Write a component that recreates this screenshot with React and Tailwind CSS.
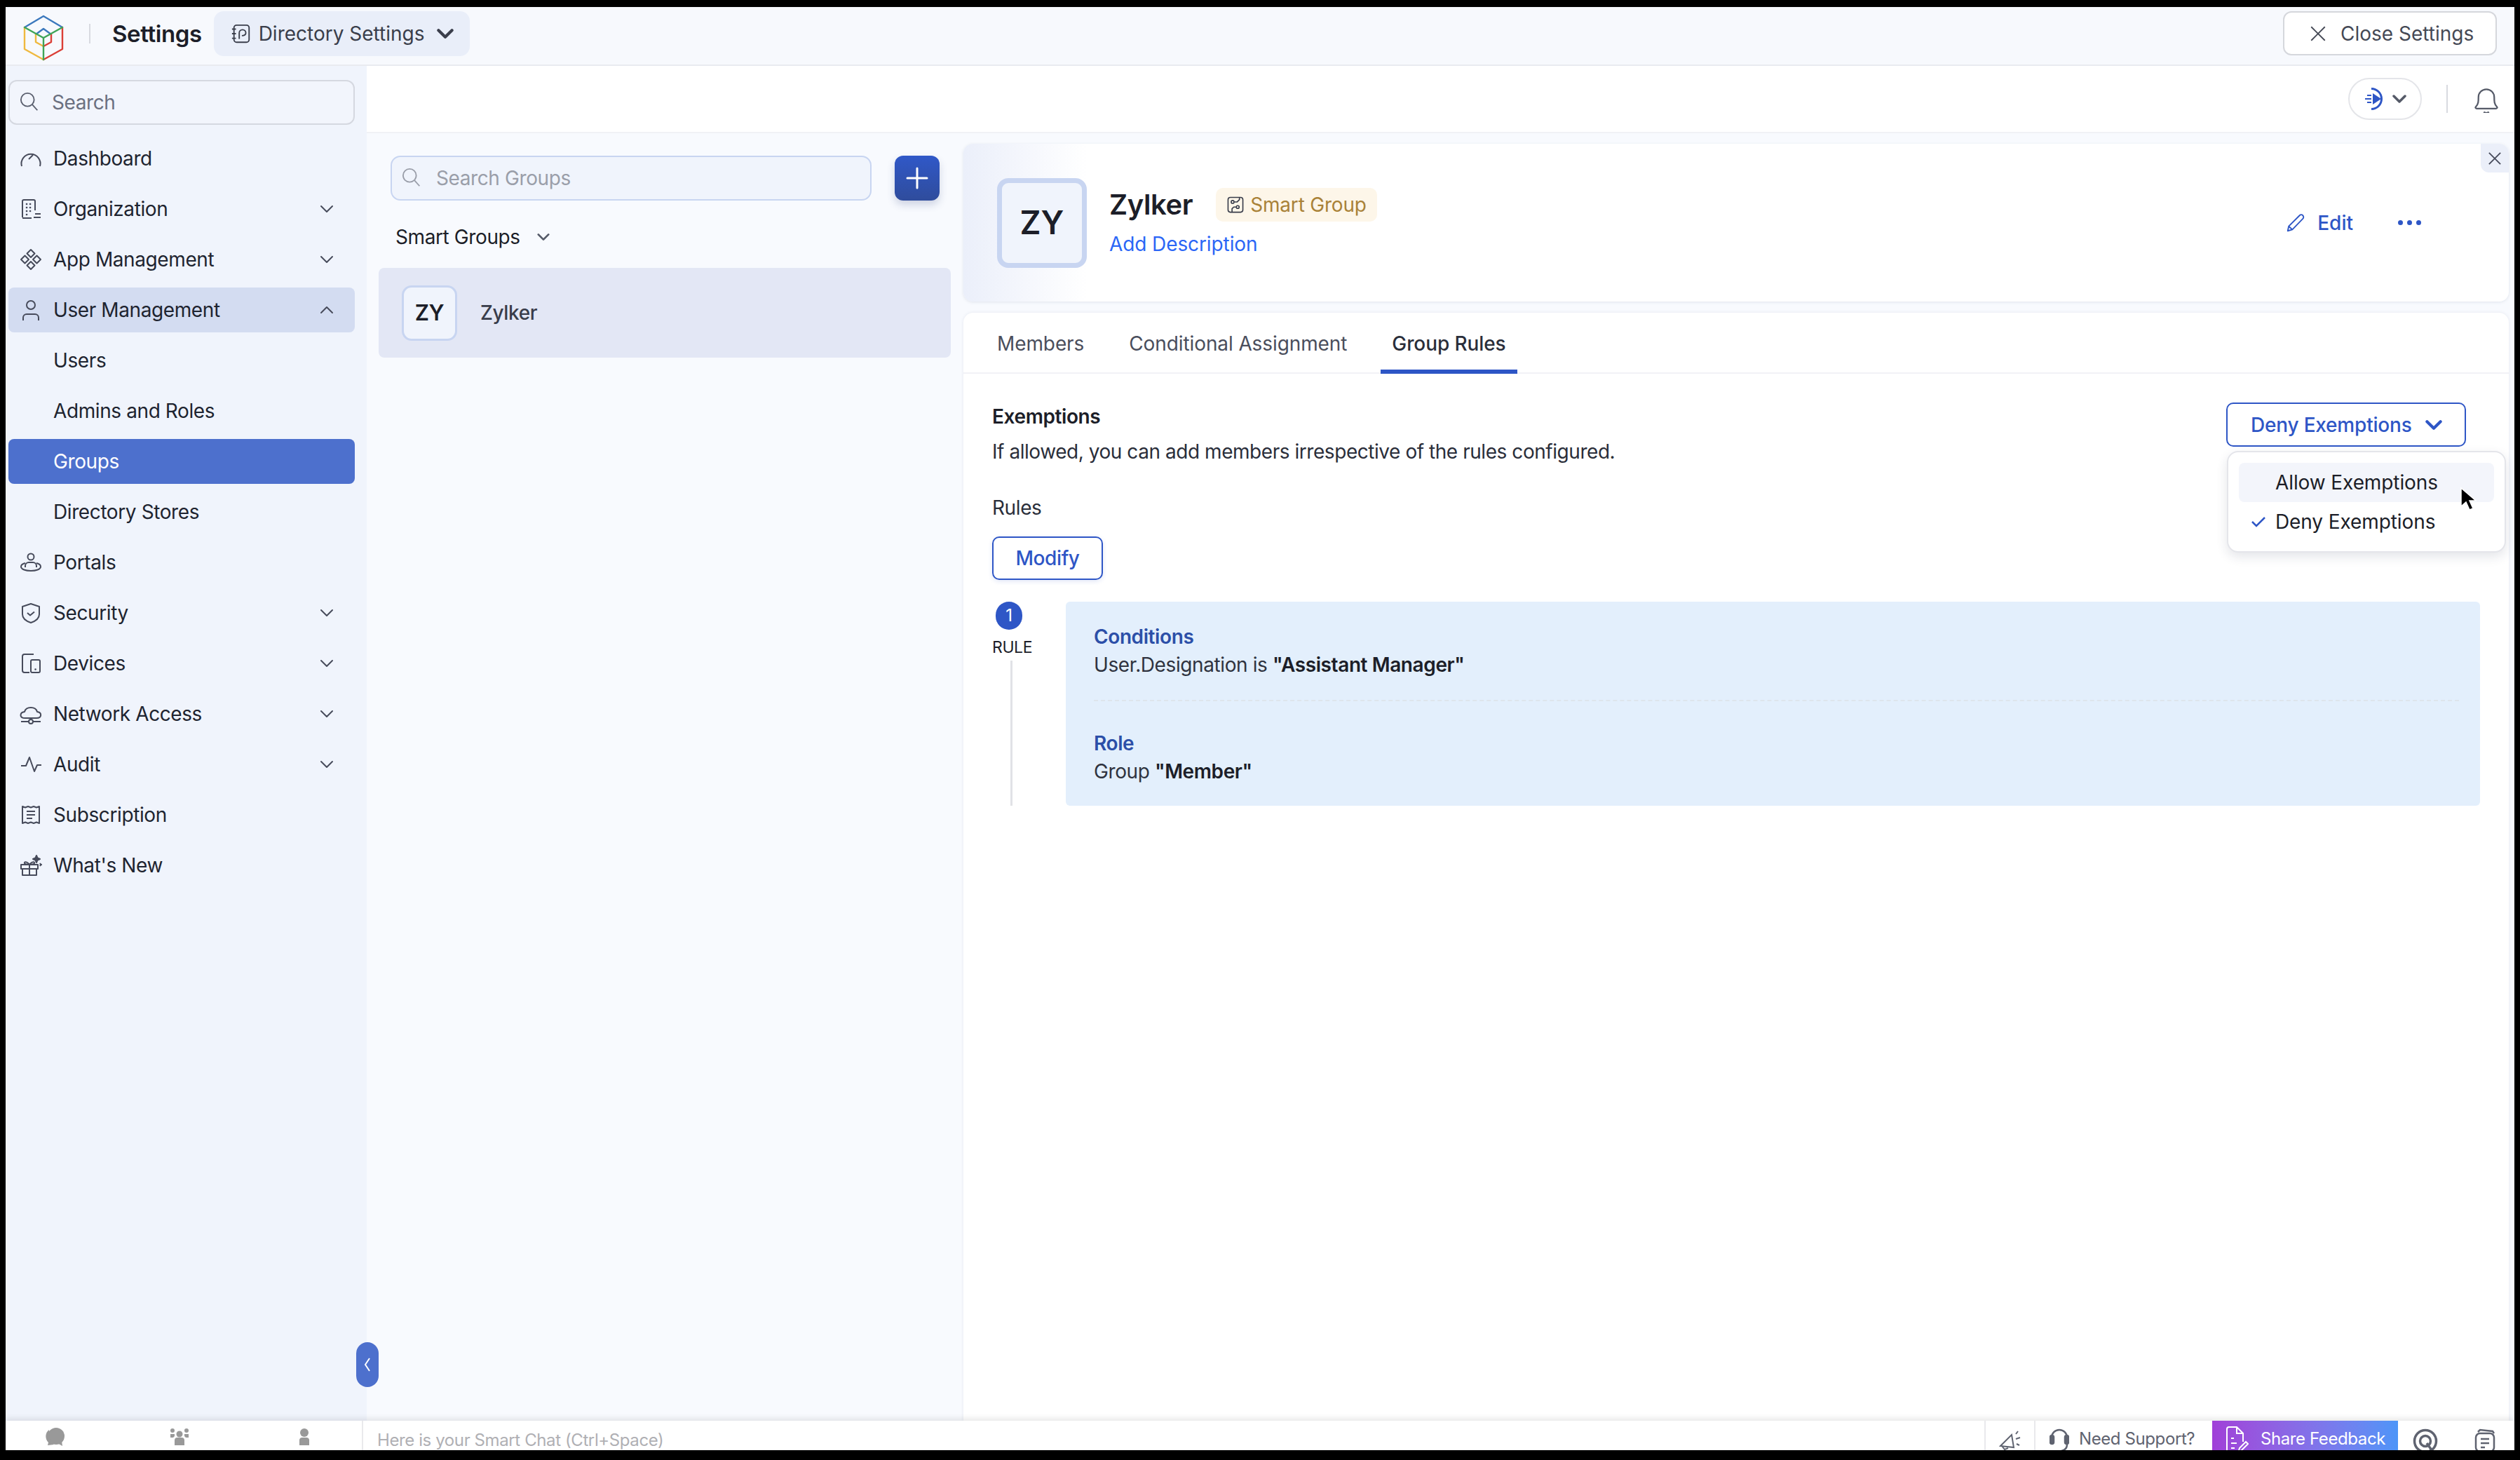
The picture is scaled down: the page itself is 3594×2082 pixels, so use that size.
const icons = {
  gauge: <><path d="M3 27a13.5 13.5 0 1 1 26 0" /><path d="M13 17l6-6" /></>,
  building: <><path d="M4 28V5a2 2 0 0 1 2-2h14a2 2 0 0 1 2 2v13" /><path d="M4 29h13" /><path d="M22 23h8M20 28h10" /><path d="M10 9h.1M15 9h.1M10 14h.1M15 14h.1M10 19h.1M15 19h.1M10 24h.1" strokeWidth="2.6" strokeLinecap="round" /></>,
  apps: <><path d="M16 2l5.5 5.5L16 13l-5.5-5.5z" /><path d="M7.5 10.5L13 16l-5.5 5.5L2 16z" /><path d="M24.5 10.5L30 16l-5.5 5.5L19 16z" /><path d="M16 19l5.5 5.5L16 30l-5.500-5.500z" /></>,
  user: <><circle cx="16" cy="9" r="6" /><path d="M5 31v-4a5 5 0 0 1 5-5h12a5 5 0 0 1 5 5v4" /></>,
  portal: <><circle cx="16" cy="8" r="4.500" /><path d="M8 23v-2a5 5 0 0 1 5-5h6a5 5 0 0 1 5 5v2" /><path d="M8 17c-4 1-6 3-6 5 0 4 7 6 14 6s14-2 14-6c0-2-2-4-6-5" /></>,
  shield: <><path d="M16 3l12 4v11c0 6-6 10-12 12-6-2-12-6-12-12V7z" /><path d="M11 16l4 3.500 6-5" /></>,
  devices: <><path d="M20 3H7a3 3 0 0 0-3 3v20a3 3 0 0 0 3 3h7" /><rect x="16" y="11" width="13" height="18" rx="2" /><path d="M22.500 24.500h.1" strokeWidth="2.500" strokeLinecap="round" /></>,
  cloud: <><path d="M8 22c-9 0-8-8-1-9 2-8 16-8 18 0 7 1 7 9-1 9z" /><path d="M2 27h11M19 27h11" /><circle cx="16" cy="27" r="3" /><path d="M16 22v2" /></>,
  pulse: <><path d="M2 18h7l5-12 7 20 4-9h6" /></>,
  receipt: <><path d="M4 4l4 1.500L12 4l4 1.500L20 4l4 1.500L28 4v24l-4-1.500L20 28l-4-1.500L12 28l-4-1.500L4 28z" /><path d="M10 11h12M10 16h12M10 21h8" /></>,
  gift: <><rect x="2" y="15" width="24" height="6" /><path d="M4 21v9h20v-9M14 15v15" /><path d="M14 15c-2-3-6-5-7-3s3 3 7 3c4 0 8-1 7-3s-5 0-7 3" /><path d="M24 2l1.500 3.500L29 7l-3.500 1.500L24 12l-1.500-3.500L19 7l3.500-1.500z" fill="#474b5b" /><path d="M29 13l.8 1.500 1.200.5-1.200.5-.8 1.500" /></>,
  search: <><circle cx="12" cy="12" r="10" /><path d="M19 19l8 9" /></>,
  close: <path d="M3 3l26 26M29 3L3 29" />,
  notebook: <><rect x="5" y="3" width="23" height="26" rx="4" /><path d="M2 9h6M2 16h6M2 23h6" /><path d="M13 24v-9a5 5 0 0 1 10 0c0 3-3 4-6 4" /></>,
  chip: <><rect x="3" y="3" width="26" height="26" rx="4" /><circle cx="11" cy="11" r="2.500" /><circle cx="20" cy="20" r="2.500" /><path d="M14 11h5l4-4v-4M17 20h-4l-3 3v6" /></>,
  pencil: <><path d="M4 28l1.500-7L22 4.500a3 3 0 0 1 5 5L11 26z" /><path d="M5.500 21l5.500 5" /></>,
  bell: <><path d="M4 25c3-3 3-6 3-11a9 9 0 0 1 18 0c0 5 0 8 3 11 1 1 0 2-1 2H5c-1 0-2-1-1-2z" /><path d="M13 31c2 1.500 4 1.500 6 0" /></>,
};

function Icon({ name, size = 32, color = '#474b5b', width = 2, className = '' }) {
  return (
    <svg width={size} height={size} viewBox="0 0 32 32" fill="none" stroke={color} strokeWidth={width} strokeLinejoin="round" className={`shrink-0 ${className}`}>
      {icons[name]}
    </svg>
  );
}

function Chevron({ size = 20, color = '#474b5b', width = 2, up = false, className = '' }) {
  return (
    <svg width={size} height={size} viewBox="0 0 20 20" fill="none" stroke={color} strokeWidth={width} strokeLinecap="round" strokeLinejoin="round" className={`shrink-0 ${className}`}>
      <path d={up ? 'M2 14l8-8 8 8' : 'M2 6l8 8 8-8'} />
    </svg>
  );
}

function Logo() {
  return (
    <svg width="100" height="72" viewBox="0 0 100 72" fill="none" strokeWidth="2.400" strokeLinejoin="round" strokeLinecap="round" className="shrink-0 mt-[2px]">
      <path d="M15 21L42 5l27 16M31 31l11-8 11 8" stroke="#3b78bd" />
      <path d="M15 21v31l27 15M31 31v11l11 6" stroke="#efb93f" />
      <path d="M69 21v31L42 67M53 31v11l-11 6" stroke="#db3f36" />
      <path d="M15 21l27 15 27-15M42 36v31" stroke="#3fa557" />
    </svg>
  );
}

function Avatar() {
  return (
    <div className="flex h-[79px] w-[79px] items-center justify-center rounded-[14px] border-[3px] border-[#c8d5f1] bg-[#f0f4fc] text-[31px] font-semibold text-[#1c1e28]">
      ZY
    </div>
  );
}

const navItems = [
  { label: 'Dashboard', icon: 'gauge' },
  { label: 'Organization', icon: 'building', chevron: true },
  { label: 'App Management', icon: 'apps', chevron: true },
  { label: 'User Management', icon: 'user', chevron: true, open: true },
  { label: 'Users', sub: true },
  { label: 'Admins and Roles', sub: true },
  { label: 'Groups', sub: true, active: true },
  { label: 'Directory Stores', sub: true },
  { label: 'Portals', icon: 'portal' },
  { label: 'Security', icon: 'shield', chevron: true },
  { label: 'Devices', icon: 'devices', chevron: true },
  { label: 'Network Access', icon: 'cloud', chevron: true },
  { label: 'Audit', icon: 'pulse', chevron: true },
  { label: 'Subscription', icon: 'receipt' },
  { label: "What's New", icon: 'gift' },
];

function NavRow({ item }) {
  const bg = item.active ? 'bg-[#4d70cd] text-white' : item.open ? 'bg-[#d3dcf1] text-[#1e2430]' : 'text-[#1e2430]';
  return (
    <div className={`flex h-[64px] items-center rounded-[8px] pl-[16px] pr-[30px] ${bg}`}>
      <div className="w-[48px] shrink-0">{item.icon && <Icon name={item.icon} />}</div>
      <span className="flex-1">{item.label}</span>
      {item.chevron && <Chevron up={item.open} />}
    </div>
  );
}

function Sidebar() {
  return (
    <aside className="relative w-[515px] shrink-0 bg-[#f0f4fc] pl-[4px] pr-[17px] pt-[20px]">
      <div className="flex h-[64px] items-center rounded-[12px] border-2 border-[#d5d8e0] bg-[#f2f5fc] pl-[14px] text-[#6b7080]">
        <Icon name="search" size={30} color="#5a5f6e" />
        <span className="ml-[16px]">Search</span>
      </div>
      <nav className="mt-[16px] flex flex-col gap-[8px]">
        {navItems.map((item) => (
          <NavRow key={item.label} item={item} />
        ))}
      </nav>
      <div className="absolute left-[500px] top-[1820px] z-10 flex h-[64px] w-[32px] items-center justify-center rounded-full bg-[#4d70cd]">
        <svg width="14" height="22" viewBox="0 0 14 22" fill="none" stroke="#fff" strokeWidth="2"><path d="M10 2L4 11l6 9" /></svg>
      </div>
    </aside>
  );
}

function GroupList() {
  return (
    <section className="w-[851px] shrink-0 pt-[32px]">
      <div className="flex gap-[33px] pl-[34px]">
        <div className="flex h-[64px] w-[686px] items-center rounded-[14px] border-2 border-[#c8d5f1] bg-[#f0f4fc] pl-[14px] text-[#9a9ea9]">
          <Icon name="search" size={30} color="#9a9ea9" />
          <span className="ml-[19px]">Search Groups</span>
        </div>
        <div className="flex h-[64px] w-[64px] items-center justify-center rounded-[12px] bg-gradient-to-b from-[#3058c8] to-[#2f4c9c] shadow-[0_6px_12px_rgba(40,60,120,0.2)]">
          <svg width="32" height="32" viewBox="0 0 32 32" stroke="#fff" strokeWidth="3" strokeLinecap="round"><path d="M16 2v28M2 16h28" /></svg>
        </div>
      </div>
      <div className="ml-[41px] mt-[32px] flex h-[40px] items-center gap-[24px] text-[#1c1e28]">
        Smart Groups
        <Chevron size={18} width={3} color="#555a68" />
      </div>
      <div className="ml-[17px] mt-[24px] flex h-[128px] w-[816px] items-center gap-[33px] rounded-[8px] bg-[#e3e7f5] pl-[33px]">
        <Avatar />
        <span className="font-medium text-[#383c4a]">Zylker</span>
      </div>
    </section>
  );
}

function GroupHeader() {
  return (
    <div className="relative flex h-[225px] shrink-0 items-center rounded-[14px] bg-gradient-to-r from-[#ebeffa] via-white to-white pl-[48px] pr-[125px] tracking-normal shadow-[0_1px_4px_rgba(60,70,110,0.12)] [--tw-gradient-via-position:8%]">
      <div className="flex h-[128px] w-[128px] items-center justify-center rounded-[16px] border-[7px] border-[#c8d5f1] bg-[#f0f4fc] text-[46px] font-semibold text-[#1c1e28]">
        ZY
      </div>
      <div className="ml-[32px] flex flex-1 flex-col">
        <div className="flex items-center gap-[33px]">
          <span className="text-[40px] font-semibold leading-[50px] tracking-[-0.4px] text-[#1c1e28]">Zylker</span>
          <span className="flex h-[48px] items-center gap-[8px] rounded-[10px] bg-[#fdf6e9] px-[15px] tracking-[-0.2px] text-[#a98238]">
            <Icon name="chip" size={26} color="#383c4a" />
            Smart Group
          </span>
        </div>
        <span className="mt-[10px] tracking-[-0.1px] text-[#2b66f6]">Add Description</span>
      </div>
      <div className="flex items-center text-[#2e56c6]">
        <Icon name="pencil" size={30} color="#2e56c6" />
        <span className="ml-[16px] font-medium">Edit</span>
        <span className="ml-[64px] flex gap-[6px]">
          <i className="h-[7px] w-[7px] rounded-full bg-[#2e56c6]" />
          <i className="h-[7px] w-[7px] rounded-full bg-[#2e56c6]" />
          <i className="h-[7px] w-[7px] rounded-full bg-[#2e56c6]" />
        </span>
      </div>
      <div className="absolute right-0 top-0 flex h-[41px] w-[40px] items-center justify-center rounded-bl-[12px] rounded-tr-[14px] bg-[#ebeff9]">
        <Icon name="close" size={20} color="#474b5b" width={3} />
      </div>
    </div>
  );
}

function ExemptionMenu() {
  return (
    <div className="relative w-[342px] tracking-[-0.1px]">
      <div className="flex h-[63px] items-center justify-between rounded-[10px] border-2 border-[#2e56c6] bg-white pl-[33px] pr-[32px] font-medium tracking-[-0.2px] text-[#2e56c6]">
        Deny Exemptions
        <Chevron size={24} width={3.500} color="#2e56c6" />
      </div>
      <div className="absolute left-[1px] top-[69px] z-20 h-[145px] w-[398px] rounded-[16px] border-2 border-[#e4e5ea] bg-white px-[15px] pt-[15px] shadow-[0_6px_16px_rgba(30,40,70,0.12)]">
        <div className="relative flex h-[56px] items-center rounded-[8px] bg-[#f3f5fb] pl-[52px] text-[#1c1e28]">
          Allow Exemptions
          <svg width="26" height="36" viewBox="0 0 26 36" className="absolute left-[314px] top-[34px]">
            <path d="M3 2v26l7-6 5 11 5-2-5-11h9z" fill="#000" stroke="#fff" strokeWidth="1.500" />
          </svg>
        </div>
        <div className="flex h-[56px] items-center text-[#1c1e28]">
          <svg width="20" height="16" viewBox="0 0 20 16" fill="none" stroke="#2e56c6" strokeWidth="2.500" className="ml-[18px]"><path d="M1 8l6 6L19 2" /></svg>
          <span className="ml-[14px]">Deny Exemptions</span>
        </div>
      </div>
    </div>
  );
}

function RuleCard() {
  return (
    <div className="mt-[31px] flex h-[291px] w-[2122px]">
      <div className="flex w-[105px] shrink-0 flex-col">
        <div className="ml-[5px] flex h-[40px] w-[38px] items-center justify-center rounded-full bg-[#2e56c6] text-[24px] text-white">1</div>
        <span className="mt-[10px] text-[23px] leading-[30px] text-[#1c1e28]">RULE</span>
        <div className="ml-[26px] mt-[4px] w-[3px] flex-1 bg-[#e1e2e6]" />
      </div>
      <div className="flex-1 rounded-[6px] bg-[#e3effc] pb-[29px] pl-[40px] pr-[30px] pt-[30px] leading-[40px] text-[#2f333f]">
        <div className="font-semibold text-[#2c4fa8]">Conditions</div>
        <div>
          User.Designation is <b className="font-semibold text-[#1c1e28]">"Assistant Manager"</b>
        </div>
        <div className="mt-[30px] border-t-2 border-dashed border-[#dde5ec]" />
        <div className="mt-[40px] font-semibold text-[#2c4fa8]">Role</div>
        <div>
          Group <b className="font-semibold text-[#1c1e28]">"Member"</b>
        </div>
      </div>
    </div>
  );
}

function GroupDetail() {
  return (
    <section className="flex min-w-0 flex-1 flex-col gap-[16px] pr-[8px] pt-[15px]">
      <GroupHeader />
      <div className="flex-1 rounded-t-[14px] bg-white shadow-[0_0_4px_rgba(60,70,110,0.1)]">
        <div className="flex h-[87px] gap-[32px] border-b-2 border-[#f1f2f6] pl-[32px] tracking-[-0.1px] text-[#4a4e5c]">
          <span className="flex h-[87px] items-center px-[16px]">Members</span>
          <span className="flex h-[87px] items-center px-[16px]">Conditional Assignment</span>
          <span className="flex h-[87px] items-center border-b-[6px] border-[#2e56c6] px-[16px] pt-[6px] font-medium text-[#2a2e3a]">Group Rules</span>
        </div>
        <div className="pl-[41px] pt-[41px] text-[#1c1e28]">
          <div className="flex w-[2102px] items-start justify-between">
            <div>
              <div className="h-[40px] font-semibold leading-[40px]">Exemptions</div>
              <div className="mt-[10px] leading-[40px] tracking-[-0.45px] text-[#2a2e3a]">If allowed, you can add members irrespective of the rules configured.</div>
            </div>
            <ExemptionMenu />
          </div>
          <div className="mt-[40px] leading-[40px] text-[#2a2e3a]">Rules</div>
          <div className="mt-[21px] flex h-[62px] w-[158px] items-center justify-center rounded-[10px] border-2 border-[#2e56c6] font-medium text-[#2e56c6] shadow-[0_2px_6px_rgba(46,86,198,0.15)]">
            Modify
          </div>
          <RuleCard />
        </div>
      </div>
    </section>
  );
}

function ChatTab({ label, children }) {
  return (
    <div className="flex w-[178px] shrink-0 flex-col items-center pt-[10px] text-[20px] leading-[24px] text-[#8a8a8a]">
      <svg width="36" height="26" viewBox="0 0 36 26" fill="#999">{children}</svg>
      <span className="mt-[3px]">{label}</span>
    </div>
  );
}

function BottomBar() {
  return (
    <footer className="relative z-10 flex h-[42px] shrink-0 overflow-hidden bg-white text-[24px] shadow-[0_-3px_8px_rgba(0,0,0,0.1)]">
      <div className="w-[510px] shrink-0 overflow-hidden border-r-2 border-[#e9e9ec]">
        <div className="-ml-[19px] flex">
          <ChatTab label="Chats">
            <circle cx="20" cy="12" r="12" />
            <path d="M10 3C4 7 4 16 9 21l-1 4 9-1-5-4z" />
            <path d="M22 22l7 4-1-7z" />
          </ChatTab>
          <ChatTab label="Channels">
            <circle cx="18" cy="9" r="4.500" /><path d="M11 25v-7a4 4 0 0 1 4-4h6a4 4 0 0 1 4 4v7z" />
            <circle cx="8" cy="4" r="3" /><path d="M5 14V9h6v3l-2 2z" />
            <circle cx="28" cy="4" r="3" /><path d="M25 12V9h6v5h-4z" />
          </ChatTab>
          <ChatTab label="Contacts">
            <circle cx="18" cy="7" r="6" /><path d="M11 25v-8a4 4 0 0 1 4-3h6a4 4 0 0 1 4 3v8z" />
          </ChatTab>
        </div>
      </div>
      <div className="flex-1 pl-[20px] leading-[56px] text-[#b0b0b4]">Here is your Smart Chat (Ctrl+Space)</div>
      <div className="flex w-[73px] shrink-0 justify-center border-x-2 border-[#e9e9ec] pt-[14px]">
        <svg width="34" height="34" viewBox="0 0 34 34" fill="none" stroke="#5f6370" strokeWidth="2"><path d="M3 22L19 6l3 18zM5 22l4 5 5-2M25 5l3-4M25 12l6-2M26 19l4 2" /></svg>
      </div>
      <div className="flex w-[252px] shrink-0 items-start gap-[14px] pl-[20px] pt-[8px] leading-[36px] text-[#5f6370]">
        <svg width="28" height="40" viewBox="0 0 28 40" fill="none" stroke="#5f6370" strokeWidth="2.500" className="shrink-0"><path d="M3 16a11 11 0 0 1 22 0v10c0 6-4 8-8 9" /><rect x="1" y="13" width="5" height="12" rx="2.500" fill="#5f6370" /><rect x="22" y="13" width="5" height="12" rx="2.500" fill="#5f6370" /></svg>
        Need Support?
      </div>
      <div className="flex w-[265px] shrink-0 items-start gap-[17px] bg-gradient-to-r from-[#a03fd8] to-[#4c95f8] pl-[20px] pt-[8px] leading-[36px] text-white">
        <svg width="32" height="40" viewBox="0 0 32 40" fill="none" stroke="#fff" strokeWidth="2" className="shrink-0"><path d="M14 38H4a3 3 0 0 1-3-3V4a3 3 0 0 1 3-3h11l9 9v12M15 1v9h9M7 17h4M7 24h8M7 31h5M17 38l2-7 9-9 3 3-9 9z" /></svg>
        Share Feedback
      </div>
      <div className="flex w-[166px] shrink-0 items-start pl-[20px] pt-[10px]">
        <svg width="38" height="38" viewBox="0 0 38 38" fill="none" stroke="#5f6370" strokeWidth="3.500" className="shrink-0"><circle cx="19" cy="19" r="15.500" /><circle cx="19" cy="19" r="7.500" /><path d="M21 22l10 14" /></svg>
        <svg width="32" height="34" viewBox="0 0 32 34" fill="none" stroke="#5f6370" strokeWidth="2.500" className="ml-[50px] mt-[1px] shrink-0"><path d="M6 5l3-3 18 2 2 3" /><rect x="3" y="7" width="26" height="26" rx="6" /><path d="M10 15h12M10 21h12M10 27h6" /></svg>
      </div>
    </footer>
  );
}

export default function App() {
  return (
    <div className="flex h-[2082px] w-[3594px] flex-col overflow-hidden bg-black pb-[14px] pl-[8px] pr-[8px] pt-[10px] font-[Inter,sans-serif] text-[28px] tracking-[-0.4px]">
      <header className="flex h-[84px] shrink-0 items-start border-b-2 border-[#e9ebf0] bg-[#f7f9fd] pl-[12px] pr-[25px] pt-[6px]">
        <Logo />
        <div className="ml-[7px] mt-[18px] h-[28px] w-[2px] bg-[#d8dae0]" />
        <span className="ml-[31px] text-[33px] font-semibold leading-[64px] text-[#1c1e28]">Settings</span>
        <div className="ml-[17px] flex h-[64px] w-[365px] items-center rounded-[14px] bg-[#e9eef9] pl-[24px] tracking-normal text-[#3a3e4b]">
          <Icon name="notebook" size={30} color="#3a3e4b" />
          <span className="ml-[10px]">Directory Settings</span>
          <Chevron size={24} width={3.500} color="#3a3e4b" className="ml-[17px]" />
        </div>
        <div className="ml-auto flex h-[63px] w-[305px] items-center rounded-[12px] border-2 border-[#d5d7dc] bg-white pl-[36px] tracking-normal text-[#454955]">
          <Icon name="close" size={24} color="#454955" width={2.500} />
          <span className="ml-[20px]">Close Settings</span>
        </div>
      </header>
      <div className="flex min-h-0 flex-1">
        <Sidebar />
        <main className="flex min-w-0 flex-1 flex-col bg-[#f8fafe]">
          <div className="flex h-[96px] shrink-0 items-center border-b-2 border-[#f1f2f6] bg-white pr-[20px]">
            <div className="ml-auto flex h-[60px] w-[105px] items-center justify-center gap-[8px] rounded-full border-2 border-[#e4e5e9]">
              <svg width="32" height="36" viewBox="0 0 32 36" fill="none" stroke="#2e56c6" strokeWidth="3">
                <path d="M10 3.500a14.500 14.500 0 1 1 0 29" />
                <path d="M12 10l12 8-12 8z" fill="#2e56c6" stroke="none" />
                <path d="M4 13h6M1 18h9M4 23h6" strokeWidth="2" />
              </svg>
              <Chevron size={20} width={3.500} color="#555a68" />
            </div>
            <div className="ml-[35px] h-[40px] w-[2px] bg-[#d8dae0]" />
            <Icon name="bell" size={40} color="#555a68" width={1.800} className="ml-[35px]" />
          </div>
          <div className="flex min-h-0 flex-1">
            <GroupList />
            <GroupDetail />
          </div>
        </main>
      </div>
      <BottomBar />
    </div>
  );
}
